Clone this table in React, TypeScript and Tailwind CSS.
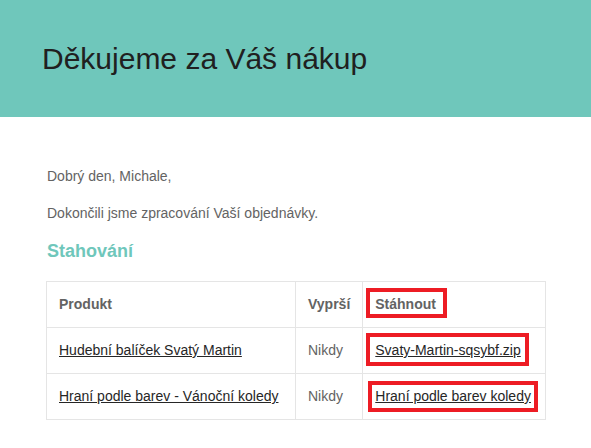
type Row = {
  product: string
  expires: string
  file: string
  box: string
}

const rows: Row[] = [
  {
    product: "Hudební balíček Svatý Martin",
    expires: "Nikdy",
    file: "Svaty-Martin-sqsybf.zip",
    box: "-left-[9px] -right-[8px] -top-[7px] -bottom-[5px]",
  },
  {
    product: "Hraní podle barev - Vánoční koledy",
    expires: "Nikdy",
    file: "Hraní podle barev koledy",
    box: "-left-[7px] -right-[7px] -top-[5px] -bottom-[5px]",
  },
]

function Marked({ children, box }: { children: React.ReactNode; box: string }) {
  return (
    <span className="relative inline-block">
      {children}
      {/* red highlight frame */}
      <span className={`pointer-events-none absolute border-4 border-[#ed1c24] ${box}`} />
    </span>
  )
}

export default function App() {
  return (
    <div className="min-h-[448px] bg-white font-['Liberation_Sans',Arial,sans-serif]">
      {/* Header */}
      <div className="bg-[#6fc7bb] px-[42px] py-[36px]">
        <h1 className="text-[30px] leading-[45px] text-[#202020]">Děkujeme za Váš nákup</h1>
      </div>

      {/* Body */}
      <div className="px-[46px] pt-[49px] text-[14px] leading-[21px] text-[#636363]">
        <p className="mb-[16px] pl-px">Dobrý den, Michale,</p>
        <p className="mb-[16px] pl-px">Dokončili jsme zpracování Vaší objednávky.</p>
        <h2 className="mb-[18px] pl-px text-[18px] leading-[23px] font-bold text-[#6fc7bb]">Stahování</h2>

        <table className="w-[500px] border-collapse border border-[#e5e5e5] text-left">
          <thead>
            <tr className="h-[46px]">
              <th className="w-[249px] border border-[#e5e5e5] px-3 font-bold">Produkt</th>
              <th className="w-[67px] border border-[#e5e5e5] px-3 font-bold">Vyprší</th>
              <th className="border border-[#e5e5e5] px-3 font-bold">
                <Marked box="-left-[9px] -right-[11px] -top-[6px] -bottom-[3px]">Stáhnout</Marked>
              </th>
            </tr>
          </thead>
          <tbody>
            {rows.map((r) => (
              <tr key={r.file} className="h-[46px]">
                <td className="border border-[#e5e5e5] px-3">
                  <a className="text-[#262626] underline">{r.product}</a>
                </td>
                <td className="border border-[#e5e5e5] px-3">{r.expires}</td>
                <td className="border border-[#e5e5e5] px-3">
                  <Marked box={r.box}>
                    <a className="text-[#262626] underline">{r.file}</a>
                  </Marked>
                </td>
              </tr>
            ))}
          </tbody>
        </table>
      </div>
    </div>
  )
}
